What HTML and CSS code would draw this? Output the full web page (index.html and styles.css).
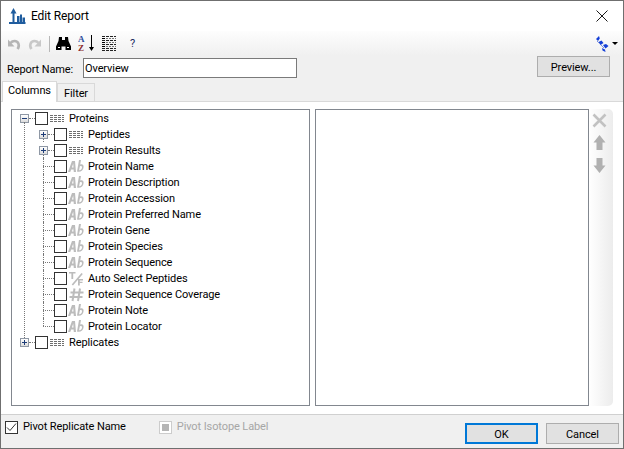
FILE: index.html
```html
<!DOCTYPE html>
<html lang="en">
<head>
<meta charset="utf-8">
<title>Edit Report</title>
<link rel="stylesheet" href="styles.css">
</head>
<body>
<svg class="defs" width="0" height="0">
  <symbol id="i-table" viewBox="0 0 16 16"><path d="M1 5.500h3M5 5.500h3M9 5.500h3M13 5.500h2M1 7.500h3M5 7.500h3M9 7.500h3M13 7.500h2M1 9.500h3M5 9.500h3M9 9.500h3M13 9.500h2M1 11.500h3M5 11.500h3M9 11.500h3M13 11.500h2" stroke="#6e6e6e" stroke-width="1" fill="none"/></symbol>
  <symbol id="i-ab" viewBox="0 0 16 16"><path d="M0 14 4 3h3l1 11H5.800l-.2-2.600H3.200L2.200 14zM3.900 9.600h1.600L5.200 5.600z" fill="#bcbcbc"/><path d="M11 2h2l-.8 4.600c1.600-1 3.600-.2 3.400 2.400-.2 3.400-3.200 5.600-6.600 4.600zM11.800 8.400l-.7 3.800c1.400.3 2.600-.8 2.900-2.700.2-1.500-1.200-2-2.200-1.100z" fill="#bcbcbc"/></symbol>
  <symbol id="i-bool" viewBox="0 0 16 16"><path d="M1 2h6.500v1.600H5.200V9H3.400V3.600H1zM13.500 3 14.800 4 5 15.500 3.700 14.500zM10 9h5v1.400h-3.200v1.300h2.700V13h-2.700v2.500H10z" fill="#bcbcbc"/></symbol>
  <symbol id="i-num" viewBox="0 0 16 16"><path d="M6.500 2.500 4.500 15M12 2.500 10 15M2.500 6.500h13M1.500 11h13" stroke="#bcbcbc" stroke-width="2" fill="none"/></symbol>
</svg>
<div class="window">
  <header class="titlebar">
    <svg class="app-icon" width="17" height="16" viewBox="0 0 17 16"><path d="M0 14h16.500v2H0zM3.500 5.500h2V14h-2zM1.500 5.500 4.500 0l3 5.500zM8 8h2.500v6H8zM11 6.500h2V14h-2zM13.500 9.500h2.500V14h-2.500z" fill="#1f5c9e"/></svg>
    <span class="title">Edit Report</span>
    <svg class="close" width="12" height="12" viewBox="0 0 12 12"><path d="M.5.500l11 11M11.500.500l-11 11" stroke="#1a1a1a" fill="none"/></svg>
  </header>
  <div class="toolbar">
    <svg width="16" height="16" viewBox="0 0 16 16"><path d="M11.500 13c2.500-3 1.200-8-3-8-1.800 0-3 .8-4 2" stroke="#b5b5b5" stroke-width="2.600" fill="none"/><path d="M2 3.500v7h6.500z" fill="#b5b5b5"/></svg>
    <svg class="redo" width="16" height="16" viewBox="0 0 16 16"><path d="M4.500 13c-2.500-3-1.200-8 3-8 1.800 0 3 .8 4 2" stroke="#c8c8c8" stroke-width="2.600" fill="none"/><path d="M14 3.500v7H7.500z" fill="#c8c8c8"/></svg>
    <span class="tool-sep"></span>
    <svg class="binoc" width="15" height="15" viewBox="0 0 15 15"><path d="M3 1h3v3h3V1h3l.5 4L15 10.500V14H9.500v-3.500h-4V14H0v-3.500L2.500 5z" fill="#000"/><path d="M2 11h2v1H2zM11 11h2v1h-2z" fill="#fff"/></svg>
    <svg class="sort" width="17" height="19" viewBox="0 0 17 19"><text class="az a" x="0" y="8">A</text><text class="az z" x="0" y="17">Z</text><path d="M13.500 1v13" stroke="#000" fill="none"/><path d="M11 13h5l-2.500 4z" fill="#000"/></svg>
    <svg class="cols" width="14" height="15" viewBox="0 0 14 15"><path d="M0 .500h14M0 4.500h14M0 8.500h14M0 12.500h14M0 14.500h14" stroke="#222" stroke-dasharray="3 1" fill="none"/><path d="M4 2.500h10M4 6.500h10M4 10.500h10" stroke="#777" stroke-dasharray="2 1" fill="none"/><path d="M0 2.500h3M0 6.500h3M0 10.500h3" stroke="#000" fill="none"/></svg>
    <span class="help">?</span>
    <span class="spacer"></span>
    <svg class="doc" width="14" height="16" viewBox="0 0 14 16"><path d="M1 3l3-3 .8 2.500L3 5zM3.500 6l3-1.500 2 2.500-3 2zM8 9l3-1 2.500 2-3 2.500zM7 12l3 1.500.5 2.500-3-1.500z" fill="#1540d8"/><path d="M2 5l3 3M6 9l3 3" stroke="#7a90e0" fill="none"/></svg>
    <span class="caret"></span>
  </div>
  <div class="name-row">
    <label class="name-label" for="report-name">Report Name:</label>
    <input class="name-input" id="report-name" type="text" value="Overview">
    <span class="spacer"></span>
    <button class="btn preview" type="button">Preview...</button>
  </div>
  <div class="tabs">
    <span class="tab active">Columns</span>
    <span class="tab">Filter</span>
  </div>
  <div class="panel">
    <div class="tree">
      <div class="row"><span class="exp minus"></span><span class="dash"></span><span class="cb"></span><svg class="ic"><use href="#i-table"/></svg><span class="lbl root-lbl">Proteins</span></div>
      <div class="kids">
        <div class="row r1"><span class="exp plus"></span><span class="dash"></span><span class="cb"></span><svg class="ic"><use href="#i-table"/></svg><span class="lbl">Peptides</span></div>
        <div class="row r1"><span class="exp plus"></span><span class="dash"></span><span class="cb"></span><svg class="ic"><use href="#i-table"/></svg><span class="lbl">Protein Results</span></div>
        <div class="row r2"><span class="stub"></span><span class="cb"></span><svg class="ic"><use href="#i-ab"/></svg><span class="lbl">Protein Name</span></div>
        <div class="row r2"><span class="stub"></span><span class="cb"></span><svg class="ic"><use href="#i-ab"/></svg><span class="lbl">Protein Description</span></div>
        <div class="row r2"><span class="stub"></span><span class="cb"></span><svg class="ic"><use href="#i-ab"/></svg><span class="lbl">Protein Accession</span></div>
        <div class="row r2"><span class="stub"></span><span class="cb"></span><svg class="ic"><use href="#i-ab"/></svg><span class="lbl">Protein Preferred Name</span></div>
        <div class="row r2"><span class="stub"></span><span class="cb"></span><svg class="ic"><use href="#i-ab"/></svg><span class="lbl">Protein Gene</span></div>
        <div class="row r2"><span class="stub"></span><span class="cb"></span><svg class="ic"><use href="#i-ab"/></svg><span class="lbl">Protein Species</span></div>
        <div class="row r2"><span class="stub"></span><span class="cb"></span><svg class="ic"><use href="#i-ab"/></svg><span class="lbl">Protein Sequence</span></div>
        <div class="row r2"><span class="stub"></span><span class="cb"></span><svg class="ic"><use href="#i-bool"/></svg><span class="lbl">Auto Select Peptides</span></div>
        <div class="row r2"><span class="stub"></span><span class="cb"></span><svg class="ic"><use href="#i-num"/></svg><span class="lbl">Protein Sequence Coverage</span></div>
        <div class="row r2"><span class="stub"></span><span class="cb"></span><svg class="ic"><use href="#i-ab"/></svg><span class="lbl">Protein Note</span></div>
        <div class="row r2 last"><span class="stub"></span><span class="cb"></span><svg class="ic"><use href="#i-ab"/></svg><span class="lbl">Protein Locator</span></div>
      </div>
      <div class="row"><span class="exp plus"></span><span class="dash"></span><span class="cb"></span><svg class="ic"><use href="#i-table"/></svg><span class="lbl root-lbl">Replicates</span></div>
    </div>
    <div class="selected"></div>
    <div class="side">
      <svg width="15" height="15" viewBox="0 0 15 15"><path d="M1.500 1.500l12 12M13.500 1.500l-12 12" stroke="#c2c2c2" stroke-width="2.600" fill="none"/></svg>
      <svg width="15" height="16" viewBox="0 0 15 16"><path d="M7.500 0l6 7.500h-3V15h-6V7.500h-3z" fill="#b0b0b0"/></svg>
      <svg width="15" height="16" viewBox="0 0 15 16"><path d="M7.500 15l6-7.500h-3V0h-6v7.500h-3z" fill="#b0b0b0"/></svg>
    </div>
  </div>
  <footer class="footer">
    <span class="check on"><svg width="11" height="11" viewBox="0 0 11 11"><path d="M1 5.500l3 3 6-7" stroke="#333" fill="none"/></svg></span>
    <span class="foot-lbl">Pivot Replicate Name</span>
    <span class="check off"><span class="square"></span></span>
    <span class="foot-lbl dim">Pivot Isotope Label</span>
    <span class="spacer"></span>
    <button class="btn ok" type="button">OK</button>
    <button class="btn cancel" type="button">Cancel</button>
  </footer>
</div>
</body>
</html>
```
FILE: styles.css
```css
* { box-sizing: border-box; }
html, body { margin: 0; padding: 0; }
body { width: 624px; height: 449px; overflow: hidden; font: 11px Roboto, "Liberation Sans", Arial, sans-serif; letter-spacing: -0.1px; color: #000; background: #f0f0f0; }
.defs { display: block; height: 0; }
.window { width: 624px; height: 449px; display: flex; flex-direction: column; border: 1px solid #6f6f6f; background: #f0f0f0; }
.spacer { flex: 1; }

.titlebar { height: 30px; flex: none; display: flex; align-items: center; background: #fff; padding: 0 15px 0 8px; }
.app-icon { flex: none; }
.title { margin-left: 5px; font-size: 12px; color: #000; flex: 1; }
.close { flex: none; }

.toolbar { height: 25px; flex: none; display: flex; align-items: center; padding: 0 5px; background: linear-gradient(#fdfdfd, #f0f0f0); }
.redo { margin-left: 5px; }
.tool-sep { width: 1px; height: 16px; background: #b8b8b8; margin: 0 0 0 6px; }
.binoc { margin-left: 6px; }
.sort { margin-left: 7px; }
.az { font: bold 9px "Liberation Serif", serif; }
.a { fill: #2f4f9e; }
.z { fill: #8a2c2c; }
.cols { margin-left: 7px; }
.help { margin-left: 14px; width: 8px; font-size: 11px; color: #1a2a60; }
.doc { margin-right: 3px; }
.caret { width: 0; height: 0; border: 3px solid transparent; border-top: 3px solid #000; border-bottom: 0; }

.name-row { height: 24px; flex: none; display: flex; align-items: flex-start; padding: 0 13px 0 6px; }
.name-label { width: 76px; flex: none; margin-top: 7px; }
.name-input { width: 214px; height: 20px; margin-top: 2px; border: 1px solid #7a7a7a; padding: 1px 1px 0; font: inherit; letter-spacing: inherit; background: #fff; outline: 0; }
.btn { font: inherit; letter-spacing: inherit; color: #000; background: #e1e1e1; border: 1px solid #adadad; padding: 1px 0 0; }
.preview { width: 73px; height: 21px; margin-top: 0; }

.tabs { height: 21px; flex: none; display: flex; align-items: flex-end; padding-left: 1px; }
.tab { height: 18px; width: 38px; display: flex; align-items: center; justify-content: center; padding-top: 1px; background: #f0f0f0; border: 1px solid #d9d9d9; border-bottom: 0; }
.tab.active { height: 21px; width: 55px; background: #fff; padding-top: 0; padding-bottom: 3px; margin-bottom: -1px; position: relative; z-index: 1; }

.panel { flex: 1; min-height: 0; display: flex; background: #fff; border-top: 1px solid #d9d9d9; border-bottom: 1px solid #d0d0d0; padding: 7px 10px 8px 10px; }
.tree { width: 299px; flex: none; border: 1px solid #82878f; background: #fff; padding: 0 0 0 8px; }
.row { height: 16px; display: flex; align-items: center; position: relative; }
.exp { width: 9px; height: 9px; flex: none; border: 1px solid #8f98a5; background: linear-gradient(#fff, #dcdcdc); position: relative; }
.exp::before { content: ""; position: absolute; left: 1px; top: 3px; width: 5px; height: 1px; background: #1d3c78; }
.plus::after { content: ""; position: absolute; left: 3px; top: 1px; width: 1px; height: 5px; background: #1d3c78; }
.dash { width: 6px; flex: none; border-top: 1px dotted #777; }
.cb { width: 13px; height: 13px; flex: none; border: 1px solid #333; background: #fff; }
.ic { width: 16px; height: 16px; flex: none; margin-left: 1px; }
.lbl { margin-left: 4px; white-space: nowrap; color: #000; }
.root-lbl { margin-left: 4px; }

.kids { position: relative; }
.kids::before { content: ""; position: absolute; left: 4px; top: -4px; height: 216px; border-left: 1px dotted #777; }
.kids > .row { padding-left: 19px; }
.kids > .row::before { content: ""; position: absolute; left: 23px; top: 0; height: 16px; border-left: 1px dotted #777; }
.kids > .row:first-child::before { top: 12px; height: 4px; }
.kids > .row.r1 + .row.r1::before { top: 12px; height: 4px; }
.kids > .row.last::before { height: 8px; }
.stub { width: 11px; margin-left: 4px; flex: none; border-top: 1px dotted #777; }

.selected { width: 274px; flex: none; margin-left: 5px; border: 1px solid #82878f; background: #fff; }
.side { flex: 1; display: flex; flex-direction: column; align-items: center; gap: 7px; padding: 4px 4px 0 0; background: linear-gradient(90deg, #fff, #ececec); border-radius: 0 5px 5px 0; }

.footer { height: 33px; flex: none; display: flex; align-items: flex-start; padding: 5px 4px 0 4px; }
.check { width: 13px; height: 13px; flex: none; display: flex; align-items: center; justify-content: center; margin-top: 1px; }
.check.on { border: 1px solid #333; background: #fff; }
.check.off { border: 1px solid #ccc; background: #fff; margin-left: 33px; }
.square { width: 7px; height: 7px; background: #b5b5b5; }
.foot-lbl { margin-left: 5px; line-height: 14px; color: #000; }
.foot-lbl.dim { color: #a6a6a6; }
.ok { width: 73px; height: 21px; margin-top: 3px; border: 2px solid #0078d7; }
.cancel { width: 73px; height: 21px; margin-top: 3px; margin-left: 8px; }
```
